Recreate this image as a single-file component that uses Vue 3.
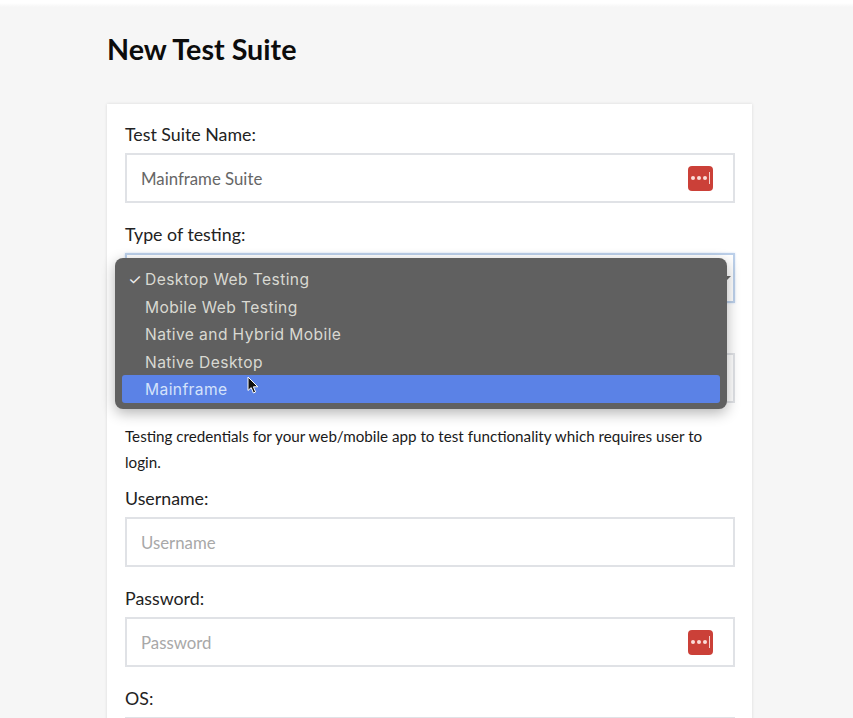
<script setup>
const menu = [
  { t: 'Desktop Web Testing', checked: true },
  { t: 'Mobile Web Testing' },
  { t: 'Native and Hybrid Mobile' },
  { t: 'Native Desktop' },
  { t: 'Mainframe', active: true }
]
</script>

<template>
  <div class="page">
    <h1 class="title">New Test Suite</h1>
    <div class="card">
      <div class="field">
        <label>Test Suite Name:</label>
        <div class="input"><span class="value">Mainframe Suite</span><span class="key"><i></i><i></i><i></i><b></b></span></div>
      </div>
      <div class="field">
        <label>Type of testing:</label>
        <div class="input select"><span class="caret"></span></div>
      </div>
      <div class="field">
        <label></label>
        <div class="input"></div>
      </div>
      <p class="desc">Testing credentials for your web/mobile app to test functionality which requires user to login.</p>
      <div class="field">
        <label>Username:</label>
        <div class="input"><span class="ph">Username</span></div>
      </div>
      <div class="field">
        <label>Password:</label>
        <div class="input"><span class="ph">Password</span><span class="key"><i></i><i></i><i></i><b></b></span></div>
      </div>
      <div class="field">
        <label>OS:</label>
        <div class="input"></div>
      </div>

      <div class="menu">
        <div v-for="m in menu" :key="m.t" class="item" :class="{ active: m.active }">
          <span class="check">{{ m.checked ? '✓' : '' }}</span><span>{{ m.t }}</span>
        </div>
        <svg class="cursor" width="13" height="19" viewBox="0 0 13 19">
          <path d="M1 1 L1 14.5 L4.2 11.6 L6.4 17 L8.6 16 L6.4 10.8 L10.8 10.8 Z" fill="#111" stroke="#fff" stroke-width="1"/>
        </svg>
      </div>
    </div>
  </div>
</template>

<style>
html, body { margin: 0; background: #f6f6f6; }
</style>

<style scoped>
.page {
  height: 718px;
  overflow: hidden;
  box-sizing: border-box;
  padding: 32px 101px 0 107px;
  background: linear-gradient(#fff 3px, #f6f6f6 7px);
  font-family: Lato, "Open Sans", sans-serif;
  color: #1d1d1d;
}
.title {
  margin: 0 0 35px;
  height: 37px;
  font-size: 28.7px;
  line-height: 35px;
  font-weight: 700;
  color: #0c0c0c;
}
.card {
  position: relative;
  background: #fff;
  padding: 20px 17px 0 18px;
  height: 700px;
  box-shadow: 0 0 3px rgba(0, 0, 0, 0.12);
}
.field { margin-bottom: 21px; }
label {
  display: block;
  height: 29px;
  font-size: 17.8px;
  line-height: 20px;
  color: #222;
}
.input {
  box-sizing: border-box;
  height: 50px;
  border: 2px solid #e0e2e6;
  display: flex;
  align-items: center;
  justify-content: space-between;
  padding: 0 20px 0 14px;
  font-size: 16.8px;
  position: relative;
}
.select { border-color: #bcd0ea; box-shadow: 0 0 2px rgba(120, 160, 230, 0.35); }
.value { color: #666; }
.ph { color: #a8a8a8; }
.key {
  width: 25px;
  height: 25px;
  border-radius: 4px;
  background: #cb4038;
  display: flex;
  align-items: center;
  justify-content: center;
  gap: 2px;
}
.key i {
  width: 4px;
  height: 4px;
  border-radius: 50%;
  background: #fbdcd8;
}
.key b {
  width: 1px;
  height: 12px;
  background: #f6cfcc;
}
.caret {
  position: absolute;
  right: 2px;
  top: 21px;
  width: 0;
  height: 0;
  border-left: 4px solid transparent;
  border-right: 4px solid transparent;
  border-top: 4px solid #666;
}
.desc {
  margin: -1px 0 13px;
  font-size: 15.2px;
  line-height: 26px;
  color: #1a1a1a;
}
.menu {
  position: absolute;
  left: 8px;
  top: 154px;
  width: 612px;
  height: 151px;
  box-sizing: border-box;
  padding: 7px 7px 6px;
  border-radius: 8px;
  background: #606060;
  box-shadow: 0 4px 14px rgba(0, 0, 0, 0.3);
  font-family: Inter, "Liberation Sans", sans-serif;
}
.item {
  height: 27.6px;
  line-height: 29px;
  font-size: 15.6px;
  letter-spacing: 0.4px;
  color: #d9d9d2;
  display: flex;
  border-radius: 3px;
}
.check {
  width: 23px;
  flex: none;
  box-sizing: border-box;
  text-align: right;
  padding-right: 3px;
  font-size: 15px;
  color: #eee;
}
.item.active {
  background: #5b82e6;
  color: #d4e2fb;
}
.cursor {
  position: absolute;
  left: 132px;
  top: 118px;
}
</style>
